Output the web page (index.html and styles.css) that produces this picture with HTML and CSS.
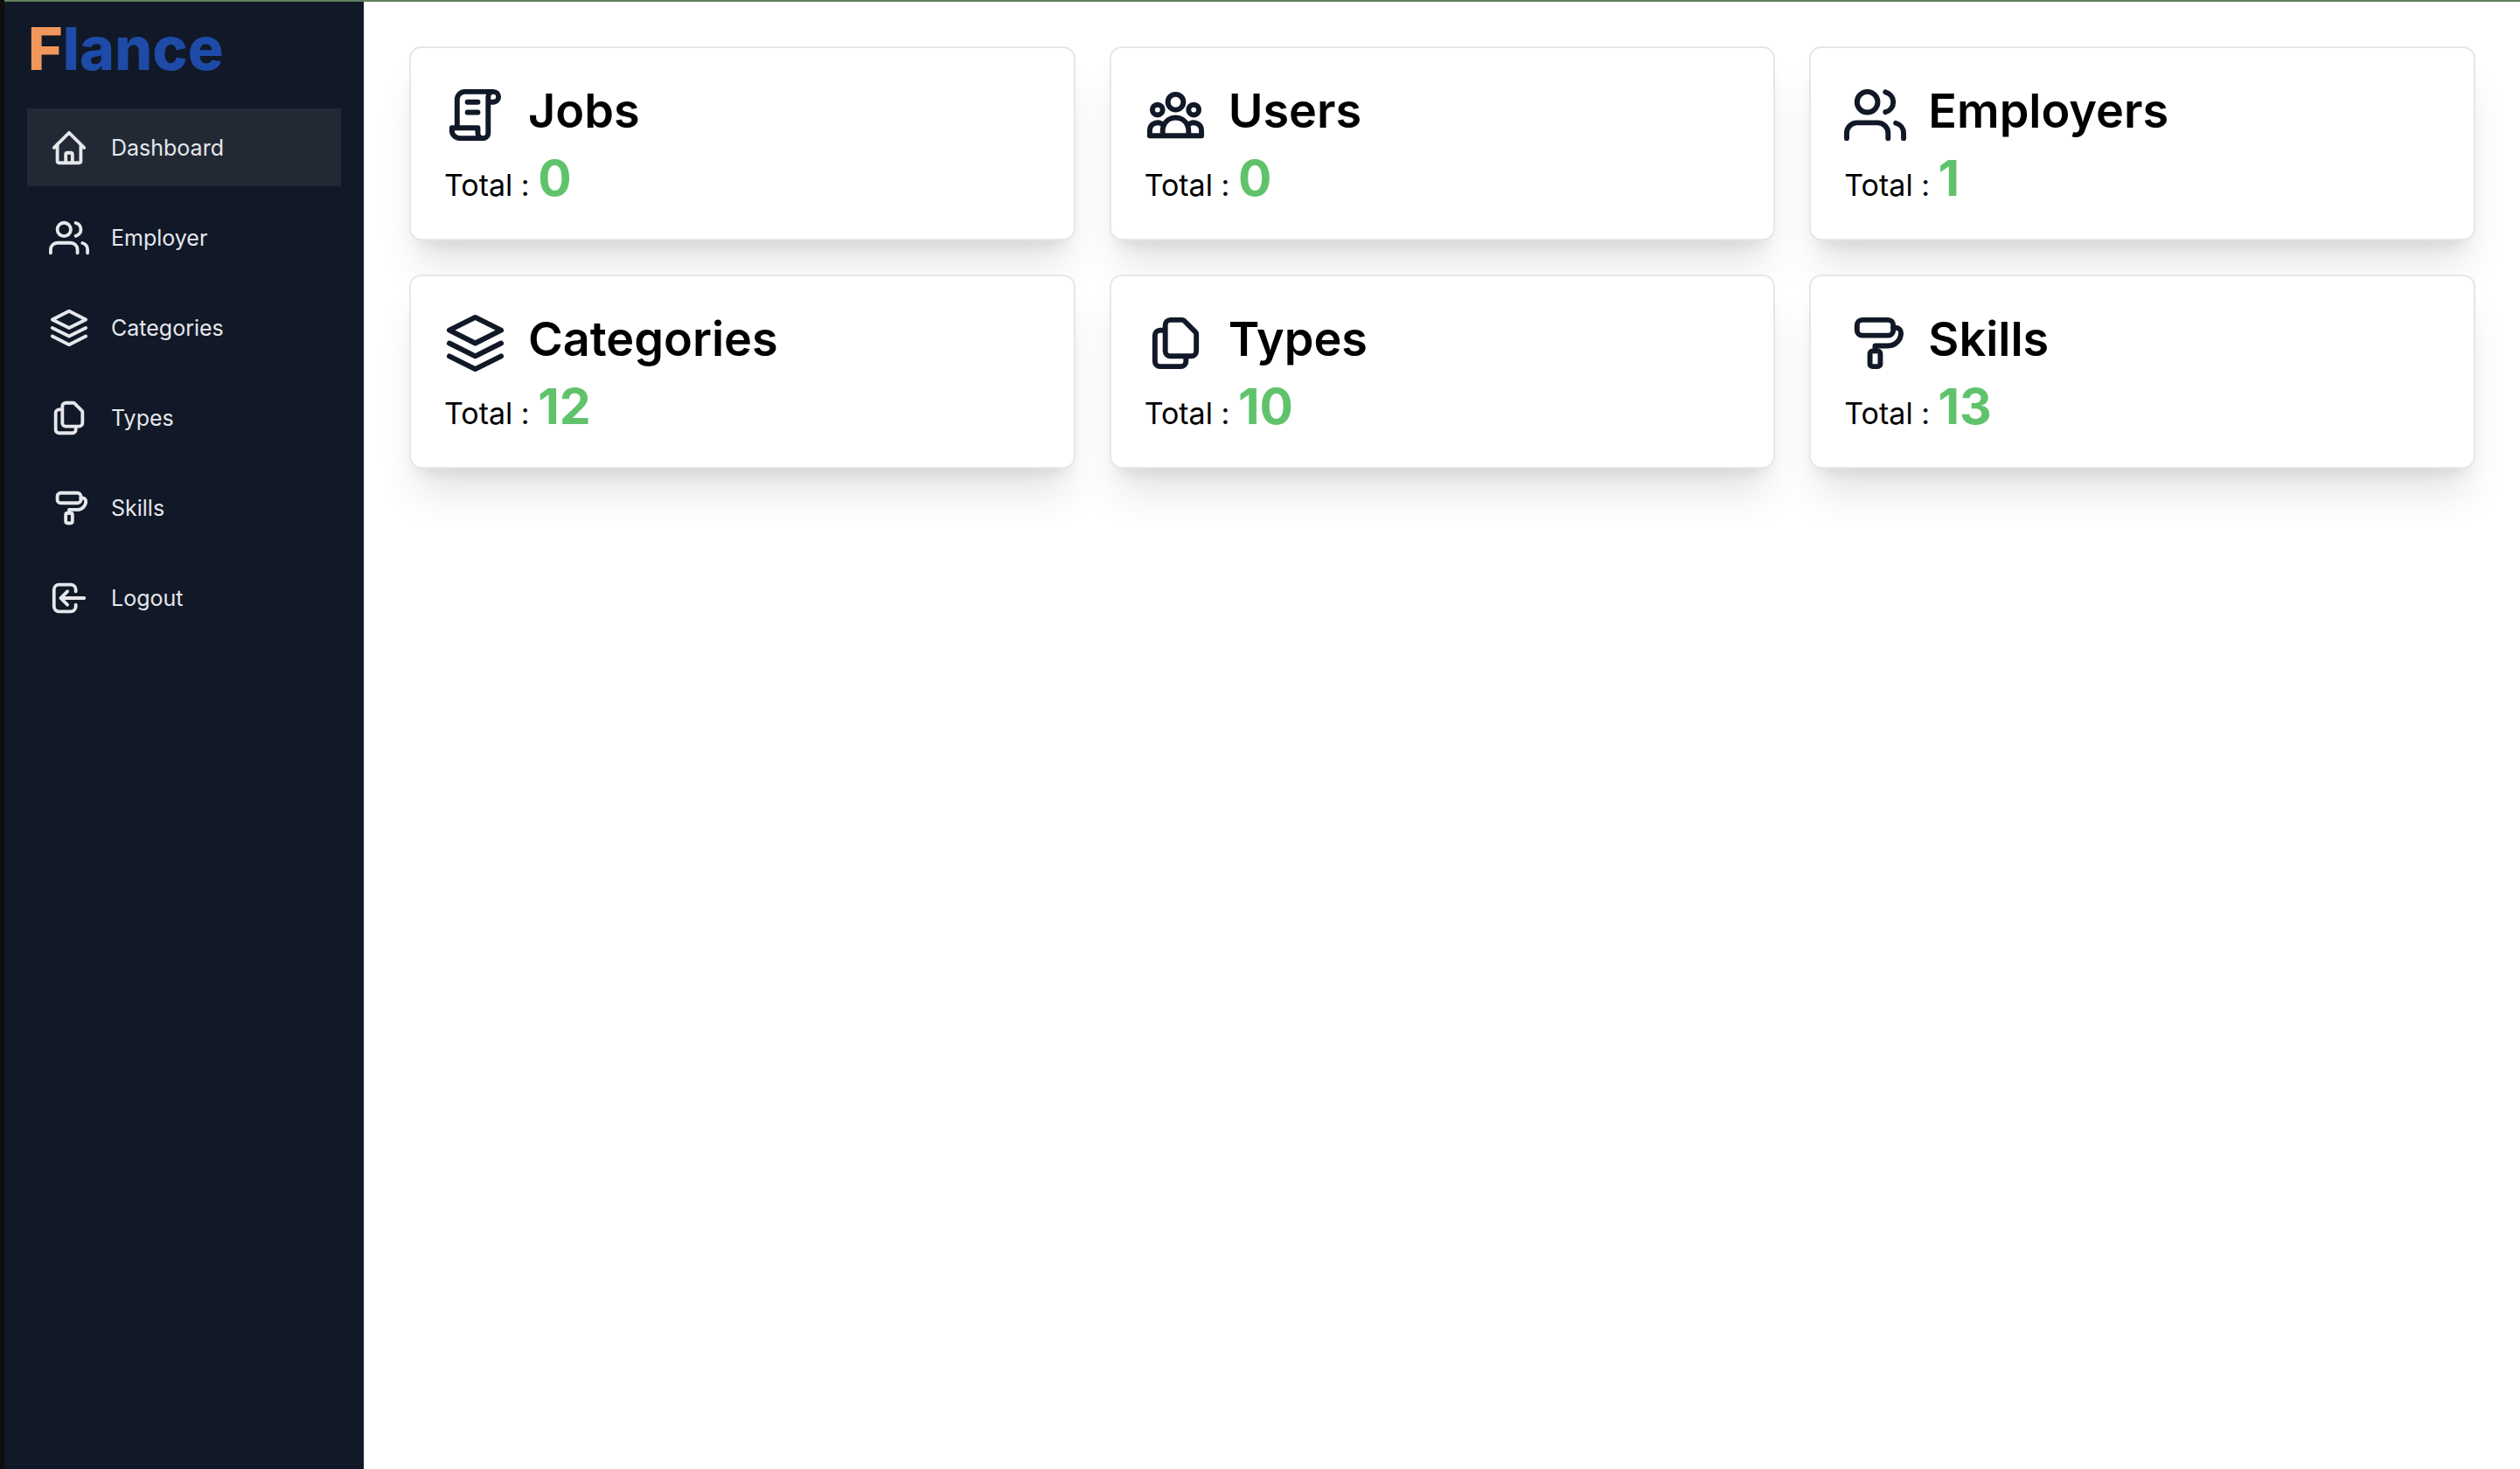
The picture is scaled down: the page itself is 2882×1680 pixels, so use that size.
FILE: index.html
```html
<!DOCTYPE html>
<html lang="en">
<head>
<meta charset="utf-8">
<meta name="viewport" content="width=device-width, initial-scale=1">
<title>Flance Dashboard</title>
<link rel="stylesheet" href="styles.css">
</head>
<body>
<svg class="sprite" aria-hidden="true">
  <symbol id="home" viewBox="0 0 24 24"><path d="M3 12l2-2m0 0l7-7 7 7M5 10v10a1 1 0 001 1h3m10-11l2 2m-2-2v10a1 1 0 01-1 1h-3m-6 0a1 1 0 001-1v-4a1 1 0 011-1h2a1 1 0 011 1v4a1 1 0 001 1m-6 0h6"/></symbol>
  <symbol id="people" viewBox="0 0 24 24"><path d="M17 21v-2a4 4 0 0 0-4-4H5a4 4 0 0 0-4 4v2M23 21v-2a4 4 0 0 0-3-3.87M16 3.13a4 4 0 0 1 0 7.75"/><circle cx="9" cy="7" r="4"/></symbol>
  <symbol id="layers" viewBox="0 0 24 24"><path d="M12 2L2 7l10 5 10-5zM2 17l10 5 10-5M2 12l10 5 10-5"/></symbol>
  <symbol id="files" viewBox="0 0 24 24"><path d="M8 7v8a2 2 0 002 2h6M8 7V5a2 2 0 012-2h4.586a1 1 0 01.707.293l4.414 4.414a1 1 0 01.293.707V15a2 2 0 01-2 2h-2M8 7H6a2 2 0 00-2 2v10a2 2 0 002 2h8a2 2 0 002-2v-2"/></symbol>
  <symbol id="roller" viewBox="0 0 24 24"><rect x="5" y="3" width="14" height="6" rx="2"/><path d="M19 6h1a2 2 0 0 1 2 2a5 5 0 0 1-5 5h-5v2"/><rect x="10" y="15" width="4" height="6" rx="1"/></symbol>
  <symbol id="logout" viewBox="0 0 24 24"><path d="M11 16l-4-4m0 0l4-4m-4 4h14m-5 4v1a3 3 0 01-3 3H6a3 3 0 01-3-3V7a3 3 0 013-3h7a3 3 0 013 3v1"/></symbol>
  <symbol id="script" viewBox="0 0 24 24"><path d="M5 17V6a3 3 0 0 1 3-3h11a2 2 0 1 1 0 4h-2M19 3a2 2 0 0 0-2 2v14a2 2 0 0 1-2 2H6a3 3 0 0 1-3-3v-1h10v2a2 2 0 0 0 2 2M9 7h4M9 11h4"/></symbol>
  <symbol id="group" viewBox="0 0 24 24"><path d="M17 20h5v-2a3 3 0 00-5.356-1.857M17 20H7m10 0v-2c0-.656-.126-1.283-.356-1.857M7 20H2v-2a3 3 0 015.356-1.857M7 20v-2c0-.656.126-1.283.356-1.857m0 0a5.002 5.002 0 019.288 0M15 7a3 3 0 11-6 0 3 3 0 016 0zm6 3a2 2 0 11-4 0 2 2 0 014 0zM7 10a2 2 0 11-4 0 2 2 0 014 0z"/></symbol>
</svg>
<div class="app">
  <aside class="sidebar">
    <a class="logo" href="#"><span class="logo-initial">F</span>lance</a>
    <nav class="nav">
      <a class="nav-link active" href="#" aria-current="page"><svg class="nav-icon"><use href="#home"/></svg>Dashboard</a>
      <a class="nav-link" href="#"><svg class="nav-icon"><use href="#people"/></svg>Employer</a>
      <a class="nav-link" href="#"><svg class="nav-icon"><use href="#layers"/></svg>Categories</a>
      <a class="nav-link" href="#"><svg class="nav-icon"><use href="#files"/></svg>Types</a>
      <a class="nav-link" href="#"><svg class="nav-icon"><use href="#roller"/></svg>Skills</a>
      <a class="nav-link" href="#"><svg class="nav-icon"><use href="#logout"/></svg>Logout</a>
    </nav>
  </aside>
  <main class="content">
    <section class="card"><h2 class="card-title"><svg class="card-icon"><use href="#script"/></svg>Jobs</h2><p class="total">Total : <span class="count">0</span></p></section>
    <section class="card"><h2 class="card-title"><svg class="card-icon"><use href="#group"/></svg>Users</h2><p class="total">Total : <span class="count">0</span></p></section>
    <section class="card"><h2 class="card-title"><svg class="card-icon"><use href="#people"/></svg>Employers</h2><p class="total">Total : <span class="count">1</span></p></section>
    <section class="card"><h2 class="card-title"><svg class="card-icon"><use href="#layers"/></svg>Categories</h2><p class="total">Total : <span class="count">12</span></p></section>
    <section class="card"><h2 class="card-title"><svg class="card-icon"><use href="#files"/></svg>Types</h2><p class="total">Total : <span class="count">10</span></p></section>
    <section class="card"><h2 class="card-title"><svg class="card-icon"><use href="#roller"/></svg>Skills</h2><p class="total">Total : <span class="count">13</span></p></section>
  </main>
</div>
</body>
</html>
```
FILE: styles.css
```css
* { box-sizing: border-box; margin: 0; padding: 0; }

body {
  font-family: Inter, "Liberation Sans", sans-serif;
  background: #fff;
  color: #000;
  border-left: 5px solid #0e0e0e;
}

.sprite { display: none; }

svg {
  flex: none;
  fill: none;
  stroke: currentColor;
  stroke-width: 2;
  stroke-linecap: round;
  stroke-linejoin: round;
}

.app {
  display: flex;
  min-height: 100vh;
  border-top: 2px solid #5f805c;
}

.sidebar {
  flex: none;
  width: 411px;
  padding: 13px 26px;
  background: #111827;
}

.logo {
  display: block;
  padding-left: 1px;
  font-size: 68px;
  font-weight: 800;
  line-height: 80px;
  color: #1e4ba8;
  text-decoration: none;
}

.logo-initial { color: #f2975b; }

.nav {
  display: flex;
  flex-direction: column;
  gap: 14px;
  margin-top: 29px;
}

.nav-link {
  display: flex;
  align-items: center;
  gap: 25px;
  height: 89px;
  padding: 0 25px;
  font-size: 25px;
  line-height: 36px;
  color: #e5e7eb;
  text-decoration: none;
}

.nav-link.active { background: #222935; }

.nav-icon { width: 46px; height: 46px; }

.content {
  flex: 1;
  display: grid;
  grid-template-columns: repeat(3, minmax(0, 1fr));
  align-content: start;
  gap: 39px;
  padding: 51px 51px 51px 52px;
}

.card {
  padding: 33px 38px 31px;
  background: #fff;
  border: 2px solid #e5e7eb;
  border-radius: 14px;
  box-shadow: 0 37px 46px -9px rgba(0, 0, 0, .1), 0 15px 18px -11px rgba(0, 0, 0, .1);
}

.card-title {
  display: flex;
  align-items: center;
  gap: 25px;
  height: 77px;
  font-size: 54px;
  font-weight: 600;
  line-height: 77px;
}

.card-icon {
  width: 71px;
  height: 71px;
  margin-top: 9px;
  color: #111827;
}

.total {
  height: 77px;
  font-size: 34px;
  line-height: 77px;
}

.count {
  font-size: 57px;
  font-weight: 700;
  color: #60c36b;
}
```
